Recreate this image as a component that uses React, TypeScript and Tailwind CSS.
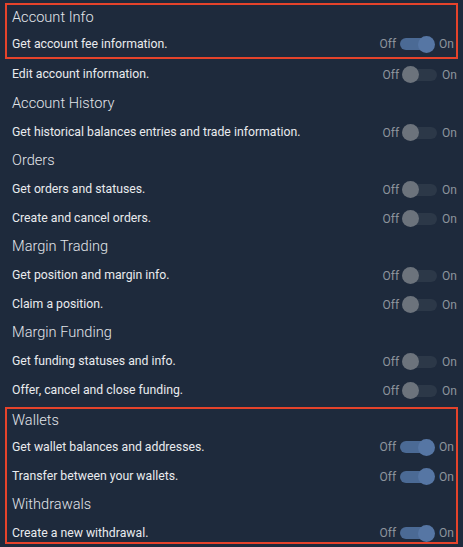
import React from "react";

type Perm = { label: string; on: boolean };
type Group = { title: string; perms: Perm[]; boxed?: boolean };

const groups: Group[] = [
  { title: "Account Info", boxed: true, perms: [{ label: "Get account fee information.", on: true }] },
  { title: "", perms: [{ label: "Edit account information.", on: false }] },
  { title: "Account History", perms: [{ label: "Get historical balances entries and trade information.", on: false }] },
  {
    title: "Orders",
    perms: [
      { label: "Get orders and statuses.", on: false },
      { label: "Create and cancel orders.", on: false },
    ],
  },
  {
    title: "Margin Trading",
    perms: [
      { label: "Get position and margin info.", on: false },
      { label: "Claim a position.", on: false },
    ],
  },
  {
    title: "Margin Funding",
    perms: [
      { label: "Get funding statuses and info.", on: false },
      { label: "Offer, cancel and close funding.", on: false },
    ],
  },
];

function Toggle({ on }: { on: boolean }) {
  return (
    <div className="flex items-center text-[12px] text-[#8d949d]">
      <span>Off</span>
      <div className="relative ml-[3px] flex h-[17px] w-[36px] items-center">
        <div className={`mx-[1px] h-[12px] w-[34px] rounded-full ${on ? "bg-[#4b6a95]" : "bg-[#2c3848]"}`} />
        <div
          className={`absolute top-0 h-[17px] w-[17px] rounded-full ${
            on ? "right-0 bg-[#5676a4]" : "left-0 bg-[#6c737c]"
          }`}
        />
      </div>
      <span className="ml-[4px]">On</span>
    </div>
  );
}

function Row({ perm, className = "h-[29px]" }: { perm: Perm; className?: string }) {
  return (
    <div className={`flex items-center justify-between ${className}`}>
      <span className="text-[12.25px] text-[#e9ebee]">{perm.label}</span>
      <Toggle on={perm.on} />
    </div>
  );
}

function Heading({ title, className = "h-[28px]" }: { title: string; className?: string }) {
  return (
    <div className={`flex items-center text-[14.6px] font-light text-[#e2e5ea] ${className}`}>{title}</div>
  );
}

export default function App() {
  return (
    <div
      className="h-[547px] w-[463px] overflow-hidden bg-[#1e2a3c] pt-[3px]"
      style={{ fontFamily: "Roboto, 'Noto Sans', sans-serif" }}
    >
      <div className="mx-[5px] border-2 border-[#e5432b] pl-[5px] pr-[2px]">
        <Heading title="Account Info" className="h-[26px]" />
        <Row perm={groups[0].perms[0]} className="h-[26px]" />
      </div>

      <div className="pl-[12px] pr-[6px]">
        <Row perm={groups[1].perms[0]} className="h-[31px]" />
        {groups.slice(2).map((g) => (
          <div key={g.title}>
            <Heading title={g.title} />
            {g.perms.map((p) => (
              <Row key={p.label} perm={p} />
            ))}
          </div>
        ))}
      </div>

      <div className="mx-[5px] mt-[2px] border-2 border-[#e5432b] pl-[5px] pr-[2px]">
        <Heading title="Wallets" className="h-[23px]" />
        <Row perm={{ label: "Get wallet balances and addresses.", on: true }} className="h-[30px]" />
        <Row perm={{ label: "Transfer between your wallets.", on: true }} className="h-[29px]" />
        <Heading title="Withdrawals" />
        <Row perm={{ label: "Create a new withdrawal.", on: true }} className="h-[23px] pt-[5px]" />
      </div>
    </div>
  );
}
